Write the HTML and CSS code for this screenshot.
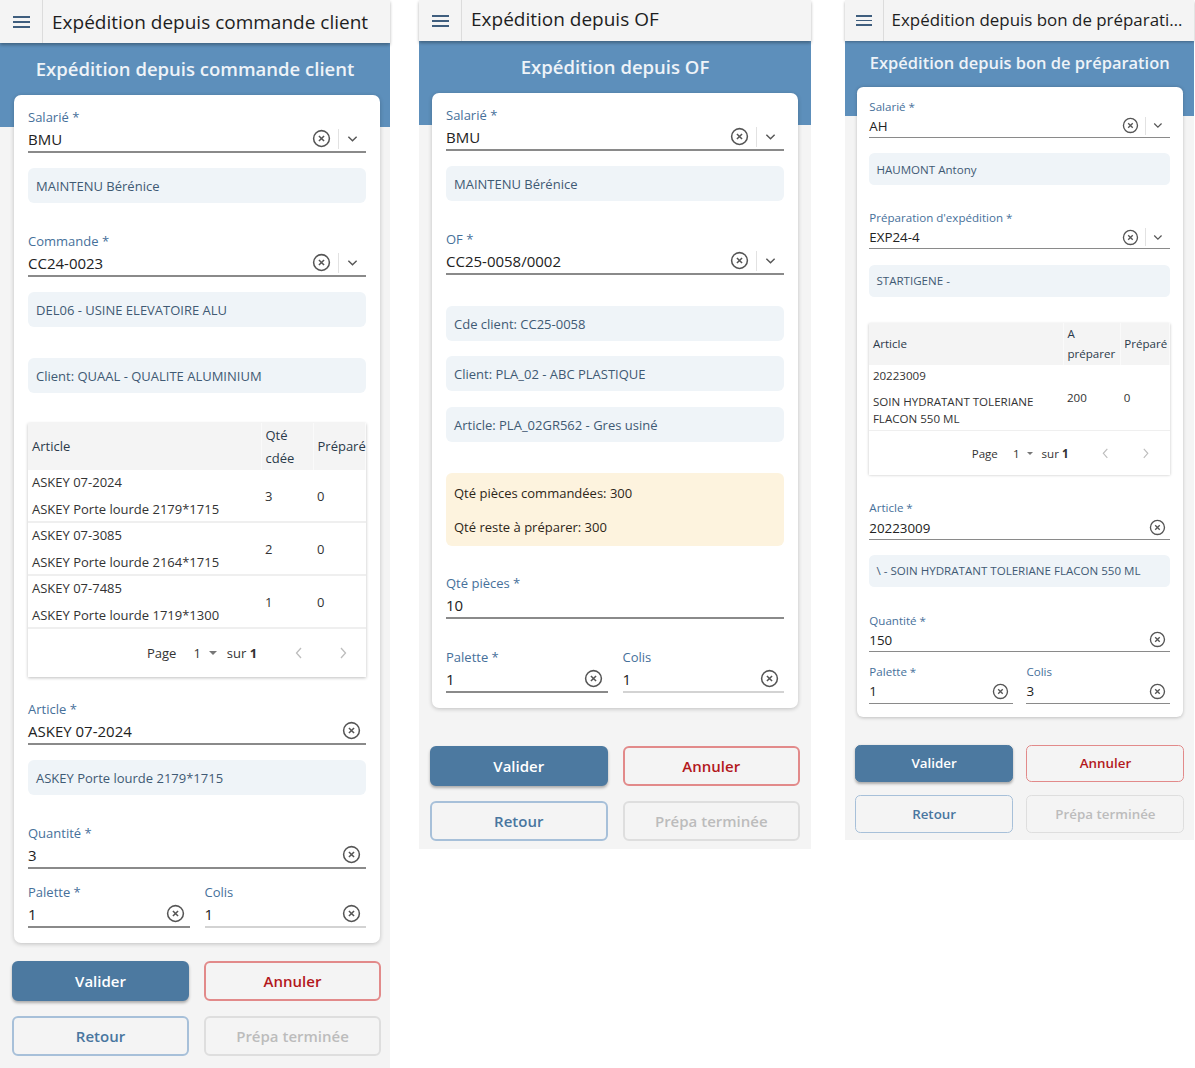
FILE: index.html
```html
<!DOCTYPE html>
<html>
<head>
    <meta charset='utf-8'>
    <title>Expéditions</title>
    <meta name='viewport' content='width=device-width, initial-scale=1'>
    <link rel="stylesheet" href="styles.css">
</head>
<body>
<div class="plateau">

    <!-- Ecran 1 : commande client -->
    <section class="ecran ecran-cc">
        <header class="barre">
            <button class="burger"><span></span><span></span><span></span></button>
            <div class="barre-titre">Expédition depuis commande client</div>
        </header>
        <div class="bandeau">Expédition depuis commande client</div>

        <div class="carte">
            <div class="champ">
                <label>Salarié *</label>
                <div class="saisie">
                    <span class="valeur">BMU</span>
                    <svg class="ico-effacer" viewBox="0 0 20 20"><circle cx="10" cy="10" r="8.3"/><path d="M7.3 7.3l5.4 5.4M12.7 7.3l-5.4 5.4"/></svg>
                    <span class="sep"></span>
                    <svg class="ico-liste" viewBox="0 0 12 8"><path d="M1.5 1.5l4.5 4.5 4.5-4.5"/></svg>
                </div>
            </div>
            <div class="info mt-15">MAINTENU Bérénice</div>

            <div class="champ mt-29">
                <label>Commande *</label>
                <div class="saisie">
                    <span class="valeur">CC24-0023</span>
                    <svg class="ico-effacer" viewBox="0 0 20 20"><circle cx="10" cy="10" r="8.3"/><path d="M7.3 7.3l5.4 5.4M12.7 7.3l-5.4 5.4"/></svg>
                    <span class="sep"></span>
                    <svg class="ico-liste" viewBox="0 0 12 8"><path d="M1.5 1.5l4.5 4.5 4.5-4.5"/></svg>
                </div>
            </div>
            <div class="info mt-15">DEL06 - USINE ELEVATOIRE ALU</div>
            <div class="info mt-31">Client: QUAAL - QUALITE ALUMINIUM</div>

            <div class="grille mt-30">
                <table>
                    <colgroup><col class="c-art"><col class="c-qte"><col></colgroup>
                    <thead>
                        <tr><th>Article</th><th>Qté cdée</th><th>Préparé</th></tr>
                    </thead>
                    <tbody>
                        <tr>
                            <td><div>ASKEY 07-2024</div><div class="desc">ASKEY Porte lourde 2179*1715</div></td>
                            <td>3</td><td>0</td>
                        </tr>
                        <tr>
                            <td><div>ASKEY 07-3085</div><div class="desc">ASKEY Porte lourde 2164*1715</div></td>
                            <td>2</td><td>0</td>
                        </tr>
                        <tr>
                            <td><div>ASKEY 07-7485</div><div class="desc">ASKEY Porte lourde 1719*1300</div></td>
                            <td>1</td><td>0</td>
                        </tr>
                    </tbody>
                </table>
                <div class="pager">
                    <span>Page</span>
                    <span class="pager-num">1</span><span class="caret"></span>
                    <span class="pager-sur">sur <b>1</b></span>
                    <svg class="pager-fl" viewBox="0 0 8 12"><path d="M6 1L1.5 6 6 11"/></svg>
                    <svg class="pager-fl" viewBox="0 0 8 12"><path d="M2 1l4.5 5L2 11"/></svg>
                </div>
            </div>

            <div class="champ mt-23">
                <label>Article *</label>
                <div class="saisie">
                    <span class="valeur">ASKEY 07-2024</span>
                    <svg class="ico-effacer" viewBox="0 0 20 20"><circle cx="10" cy="10" r="8.3"/><path d="M7.3 7.3l5.4 5.4M12.7 7.3l-5.4 5.4"/></svg>
                </div>
            </div>
            <div class="info mt-15">ASKEY Porte lourde 2179*1715</div>

            <div class="champ mt-29">
                <label>Quantité *</label>
                <div class="saisie">
                    <span class="valeur">3</span>
                    <svg class="ico-effacer" viewBox="0 0 20 20"><circle cx="10" cy="10" r="8.3"/><path d="M7.3 7.3l5.4 5.4M12.7 7.3l-5.4 5.4"/></svg>
                </div>
            </div>

            <div class="duo mt-14">
                <div class="champ">
                    <label>Palette *</label>
                    <div class="saisie">
                        <span class="valeur">1</span>
                        <svg class="ico-effacer" viewBox="0 0 20 20"><circle cx="10" cy="10" r="8.3"/><path d="M7.3 7.3l5.4 5.4M12.7 7.3l-5.4 5.4"/></svg>
                    </div>
                </div>
                <div class="champ">
                    <label>Colis</label>
                    <div class="saisie saisie-clair">
                        <span class="valeur">1</span>
                        <svg class="ico-effacer" viewBox="0 0 20 20"><circle cx="10" cy="10" r="8.3"/><path d="M7.3 7.3l5.4 5.4M12.7 7.3l-5.4 5.4"/></svg>
                    </div>
                </div>
            </div>
        </div>

        <div class="actions">
            <button class="btn btn-valider">Valider</button>
            <button class="btn btn-annuler">Annuler</button>
            <button class="btn btn-retour">Retour</button>
            <button class="btn btn-inactif">Prépa terminée</button>
        </div>
    </section>

    <!-- Ecran 2 : OF -->
    <section class="ecran ecran-of">
        <header class="barre">
            <button class="burger"><span></span><span></span><span></span></button>
            <div class="barre-titre">Expédition depuis OF</div>
        </header>
        <div class="bandeau">Expédition depuis OF</div>

        <div class="carte">
            <div class="champ">
                <label>Salarié *</label>
                <div class="saisie">
                    <span class="valeur">BMU</span>
                    <svg class="ico-effacer" viewBox="0 0 20 20"><circle cx="10" cy="10" r="8.3"/><path d="M7.3 7.3l5.4 5.4M12.7 7.3l-5.4 5.4"/></svg>
                    <span class="sep"></span>
                    <svg class="ico-liste" viewBox="0 0 12 8"><path d="M1.5 1.5l4.5 4.5 4.5-4.5"/></svg>
                </div>
            </div>
            <div class="info mt-15">MAINTENU Bérénice</div>

            <div class="champ mt-29">
                <label>OF *</label>
                <div class="saisie">
                    <span class="valeur">CC25-0058/0002</span>
                    <svg class="ico-effacer" viewBox="0 0 20 20"><circle cx="10" cy="10" r="8.3"/><path d="M7.3 7.3l5.4 5.4M12.7 7.3l-5.4 5.4"/></svg>
                    <span class="sep"></span>
                    <svg class="ico-liste" viewBox="0 0 12 8"><path d="M1.5 1.5l4.5 4.5 4.5-4.5"/></svg>
                </div>
            </div>
            <div class="info mt-31">Cde client: CC25-0058</div>
            <div class="info mt-15">Client: PLA_02 - ABC PLASTIQUE</div>
            <div class="info mt-16">Article: PLA_02GR562 - Gres usiné</div>

            <div class="alerte mt-31">
                <p>Qté pièces commandées: 300</p>
                <p>Qté reste à préparer: 300</p>
            </div>

            <div class="champ mt-28">
                <label>Qté pièces *</label>
                <div class="saisie">
                    <span class="valeur">10</span>
                </div>
            </div>

            <div class="duo mt-29">
                <div class="champ">
                    <label>Palette *</label>
                    <div class="saisie">
                        <span class="valeur">1</span>
                        <svg class="ico-effacer" viewBox="0 0 20 20"><circle cx="10" cy="10" r="8.3"/><path d="M7.3 7.3l5.4 5.4M12.7 7.3l-5.4 5.4"/></svg>
                    </div>
                </div>
                <div class="champ">
                    <label>Colis</label>
                    <div class="saisie saisie-clair">
                        <span class="valeur">1</span>
                        <svg class="ico-effacer" viewBox="0 0 20 20"><circle cx="10" cy="10" r="8.3"/><path d="M7.3 7.3l5.4 5.4M12.7 7.3l-5.4 5.4"/></svg>
                    </div>
                </div>
            </div>
        </div>

        <div class="actions">
            <button class="btn btn-valider">Valider</button>
            <button class="btn btn-annuler">Annuler</button>
            <button class="btn btn-retour">Retour</button>
            <button class="btn btn-inactif">Prépa terminée</button>
        </div>
    </section>

    <!-- Ecran 3 : bon de préparation -->
    <section class="ecran ecran-bp">
        <header class="barre">
            <button class="burger"><span></span><span></span><span></span></button>
            <div class="barre-titre">Expédition depuis bon de préparation</div>
        </header>
        <div class="bandeau">Expédition depuis bon de préparation</div>

        <div class="carte">
            <div class="champ">
                <label>Salarié *</label>
                <div class="saisie">
                    <span class="valeur">AH</span>
                    <svg class="ico-effacer" viewBox="0 0 20 20"><circle cx="10" cy="10" r="8.3"/><path d="M7.3 7.3l5.4 5.4M12.7 7.3l-5.4 5.4"/></svg>
                    <span class="sep"></span>
                    <svg class="ico-liste" viewBox="0 0 12 8"><path d="M1.5 1.5l4.5 4.5 4.5-4.5"/></svg>
                </div>
            </div>
            <div class="info mt-15">HAUMONT Antony</div>

            <div class="champ mt-28">
                <label>Préparation d'expédition *</label>
                <div class="saisie">
                    <span class="valeur">EXP24-4</span>
                    <svg class="ico-effacer" viewBox="0 0 20 20"><circle cx="10" cy="10" r="8.3"/><path d="M7.3 7.3l5.4 5.4M12.7 7.3l-5.4 5.4"/></svg>
                    <span class="sep"></span>
                    <svg class="ico-liste" viewBox="0 0 12 8"><path d="M1.5 1.5l4.5 4.5 4.5-4.5"/></svg>
                </div>
            </div>
            <div class="info mt-15">STARTIGENE -</div>

            <div class="grille mt-30">
                <table>
                    <colgroup><col class="c-art-bp"><col class="c-qte-bp"><col></colgroup>
                    <thead>
                        <tr><th>Article</th><th>A préparer</th><th>Préparé</th></tr>
                    </thead>
                    <tbody>
                        <tr>
                            <td><div>20223009</div><div class="desc">SOIN HYDRATANT TOLERIANE FLACON 550 ML</div></td>
                            <td>200</td><td>0</td>
                        </tr>
                    </tbody>
                </table>
                <div class="pager">
                    <span>Page</span>
                    <span class="pager-num">1</span><span class="caret"></span>
                    <span class="pager-sur">sur <b>1</b></span>
                    <svg class="pager-fl" viewBox="0 0 8 12"><path d="M6 1L1.5 6 6 11"/></svg>
                    <svg class="pager-fl" viewBox="0 0 8 12"><path d="M2 1l4.5 5L2 11"/></svg>
                </div>
            </div>

            <div class="champ mt-28">
                <label>Article *</label>
                <div class="saisie">
                    <span class="valeur">20223009</span>
                    <svg class="ico-effacer" viewBox="0 0 20 20"><circle cx="10" cy="10" r="8.3"/><path d="M7.3 7.3l5.4 5.4M12.7 7.3l-5.4 5.4"/></svg>
                </div>
            </div>
            <div class="info mt-15">\ - SOIN HYDRATANT TOLERIANE FLACON 550 ML</div>

            <div class="champ mt-29">
                <label>Quantité *</label>
                <div class="saisie">
                    <span class="valeur">150</span>
                    <svg class="ico-effacer" viewBox="0 0 20 20"><circle cx="10" cy="10" r="8.3"/><path d="M7.3 7.3l5.4 5.4M12.7 7.3l-5.4 5.4"/></svg>
                </div>
            </div>

            <div class="duo mt-14">
                <div class="champ">
                    <label>Palette *</label>
                    <div class="saisie">
                        <span class="valeur">1</span>
                        <svg class="ico-effacer" viewBox="0 0 20 20"><circle cx="10" cy="10" r="8.3"/><path d="M7.3 7.3l5.4 5.4M12.7 7.3l-5.4 5.4"/></svg>
                    </div>
                </div>
                <div class="champ">
                    <label>Colis</label>
                    <div class="saisie">
                        <span class="valeur">3</span>
                        <svg class="ico-effacer" viewBox="0 0 20 20"><circle cx="10" cy="10" r="8.3"/><path d="M7.3 7.3l5.4 5.4M12.7 7.3l-5.4 5.4"/></svg>
                    </div>
                </div>
            </div>
        </div>

        <div class="actions">
            <button class="btn btn-valider">Valider</button>
            <button class="btn btn-annuler">Annuler</button>
            <button class="btn btn-retour">Retour</button>
            <button class="btn btn-inactif">Prépa terminée</button>
        </div>
    </section>

</div>
</body>
</html>
```

FILE: styles.css
```css
html, body {
    margin: 0;
    background-color: #ffffff;
    font-family: "Open Sans", "Liberation Sans", sans-serif;
    color: #222;
}

.plateau {
    display: flex;
    align-items: flex-start;
    gap: 29px;
    height: 1068px;
}

.ecran {
    width: 392px;
    background-color: #f4f4f4;
    padding-bottom: 8px;
}

.ecran-cc {
    width: 390px;
    align-self: stretch;
    box-sizing: border-box;
}

.ecran-bp {
    zoom: 0.89;
    margin-left: 6px;
}

/* barre du haut */
.barre {
    display: flex;
    align-items: stretch;
    height: 42px;
    background-color: #f4f4f4;
    box-shadow: 0 2px 3px rgba(0, 0, 0, 0.3);
    position: relative;
    z-index: 2;
}

.ecran-cc .barre {
    height: 43px;
}

.ecran-of .barre {
    height: 41px;
}

.ecran-bp .barre {
    height: 46px;
}

.burger {
    width: 43px;
    border: none;
    border-right: 1px solid #dcdcdc;
    background: none;
    display: flex;
    flex-direction: column;
    justify-content: center;
    align-items: center;
    gap: 3px;
    padding: 0;
}

.burger span {
    display: block;
    width: 17px;
    height: 2px;
    background-color: #3f5e7e;
}

.barre-titre {
    flex: 1;
    display: flex;
    align-items: center;
    padding: 0 10px 0 9px;
    font-size: 19px;
    font-weight: 500;
    color: #1e1e1e;
    white-space: nowrap;
    overflow: hidden;
    text-overflow: ellipsis;
    min-width: 0;
}

.ecran-of .barre-titre {
    padding-bottom: 3px;
}

.ecran-bp .barre-titre {
    display: block;
    line-height: 44px;
}

/* bandeau bleu */
.bandeau {
    height: 84px;
    box-sizing: border-box;
    padding-top: 12px;
    background-color: #5d8fbb;
    color: #eef3f8;
    text-align: center;
    font-size: 18.5px;
    font-weight: 600;
    line-height: 27px;
}

.ecran-bp .bandeau {
    padding-top: 11px;
}

/* carte */
.carte {
    margin: -32px 13px 0;
    padding: 13px 14px 15px;
    background-color: white;
    border-radius: 7px;
    box-shadow: 0 1px 4px rgba(0, 0, 0, 0.22);
    position: relative;
}

.ecran-cc .carte {
    margin-left: 14px;
    margin-right: 10px;
}

.ecran-bp .carte {
    padding-bottom: 15px;
}

.mt-14 { margin-top: 14px; }
.mt-15 { margin-top: 15px; }
.mt-16 { margin-top: 16px; }
.mt-23 { margin-top: 23px; }
.mt-28 { margin-top: 28px; }
.mt-29 { margin-top: 29px; }
.mt-30 { margin-top: 30px; }
.mt-31 { margin-top: 31px; }

/* champs */
.champ label {
    display: block;
    font-size: 13px;
    line-height: 18px;
    color: #46709a;
}

.saisie {
    display: flex;
    align-items: center;
    height: 25px;
    border-bottom: 2px solid #8a8a8a;
    padding-right: 5px;
}

.saisie-clair {
    border-bottom-color: #d3d3d3;
}

.valeur {
    flex: 1;
    font-size: 15px;
    color: #222;
}

.ico-effacer {
    width: 19px;
    height: 19px;
    fill: none;
    stroke: #555;
    stroke-width: 1.6;
}

.sep {
    width: 1px;
    height: 20px;
    background-color: #e2e2e2;
    margin: 0 8px 0 7px;
}

.ico-liste {
    width: 11px;
    height: 8px;
    fill: none;
    stroke: #555;
    stroke-width: 1.5;
    margin-right: 3px;
}

.duo {
    display: grid;
    grid-template-columns: 1fr 1fr;
    gap: 15px;
}

/* encadrés */
.info {
    height: 35px;
    box-sizing: border-box;
    padding: 0 8px;
    display: flex;
    align-items: center;
    background-color: #eff4f8;
    border-radius: 6px;
    font-size: 13px;
    color: #3f5a74;
}

.ecran-bp .info {
    height: 36px;
}

.ecran-bp .info.mt-15 {
    margin-top: 17px;
}

.alerte {
    background-color: #fdf3de;
    border-radius: 6px;
    padding: 10px 8px 9px;
    font-size: 13px;
    color: #2e2618;
}

.alerte p {
    margin: 0;
    line-height: 20px;
}

.alerte p + p {
    margin-top: 14px;
}

/* tableau */
.grille {
    background-color: white;
    box-shadow: 0 1px 3px rgba(0, 0, 0, 0.25);
    overflow: hidden;
}

.grille table {
    width: 100%;
    border-collapse: collapse;
    table-layout: fixed;
    font-size: 13px;
}

.c-art { width: 233px; }
.c-qte { width: 52px; }
.c-art-bp { width: 218px; }
.c-qte-bp { width: 64px; }

.grille th {
    background-color: #f4f4f4;
    font-weight: 400;
    text-align: left;
    color: #2b3a4a;
    height: 47px;
    line-height: 23px;
    padding: 0 4px;
    border-right: 1px solid #fafafa;
    white-space: normal;
    overflow: visible;
}

.grille th:last-child {
    white-space: nowrap;
}

.grille td {
    color: #333;
    padding: 2px 4px;
    line-height: 20px;
    border-bottom: 2px solid #efefef;
    vertical-align: middle;
}

.grille .desc {
    margin-top: 7px;
}

.ecran-bp .grille .desc {
    margin-top: 9px;
}

.pager {
    display: flex;
    align-items: center;
    height: 48px;
    padding-left: 119px;
    font-size: 13px;
    color: #333;
}

.ecran-bp .pager {
    height: 50px;
    padding-left: 115px;
}

.pager-num {
    margin-left: 17px;
}

.caret {
    width: 0;
    height: 0;
    border-left: 4px solid transparent;
    border-right: 4px solid transparent;
    border-top: 4px solid #777;
    margin-left: 8px;
}

.pager-sur {
    margin-left: 10px;
}

.pager-fl {
    width: 8px;
    height: 12px;
    fill: none;
    stroke: #bdbdbd;
    stroke-width: 1.3;
    margin-left: 38px;
}

.pager-fl + .pager-fl {
    margin-left: 36px;
}

/* boutons */
.actions {
    display: grid;
    grid-template-columns: 1fr 1fr;
    gap: 15px;
    margin: 18px 11px 0;
}

.ecran-cc .actions {
    margin-left: 12px;
    margin-right: 9px;
}

.ecran-of .actions {
    margin-top: 38px;
}

.ecran-bp .actions {
    margin-top: 31px;
}

.btn {
    height: 40px;
    border-radius: 6px;
    font-family: "Open Sans", "Liberation Sans", sans-serif;
    font-size: 15px;
    font-weight: 600;
    background-color: #f4f4f4;
    border: 2px solid #ddd;
    cursor: pointer;
}

.ecran-bp .btn {
    height: 42px;
}

.btn-valider {
    background-color: #4c79a0;
    border-color: #4c79a0;
    color: white;
    box-shadow: 0 2px 3px rgba(0, 0, 0, 0.3);
}

.btn-annuler {
    border-color: #e28a8a;
    color: #b3181c;
}

.btn-retour {
    border-color: #a7c0d9;
    color: #49769f;
}

.btn-inactif {
    border-color: #dedede;
    color: #bcbcbc;
}
```
